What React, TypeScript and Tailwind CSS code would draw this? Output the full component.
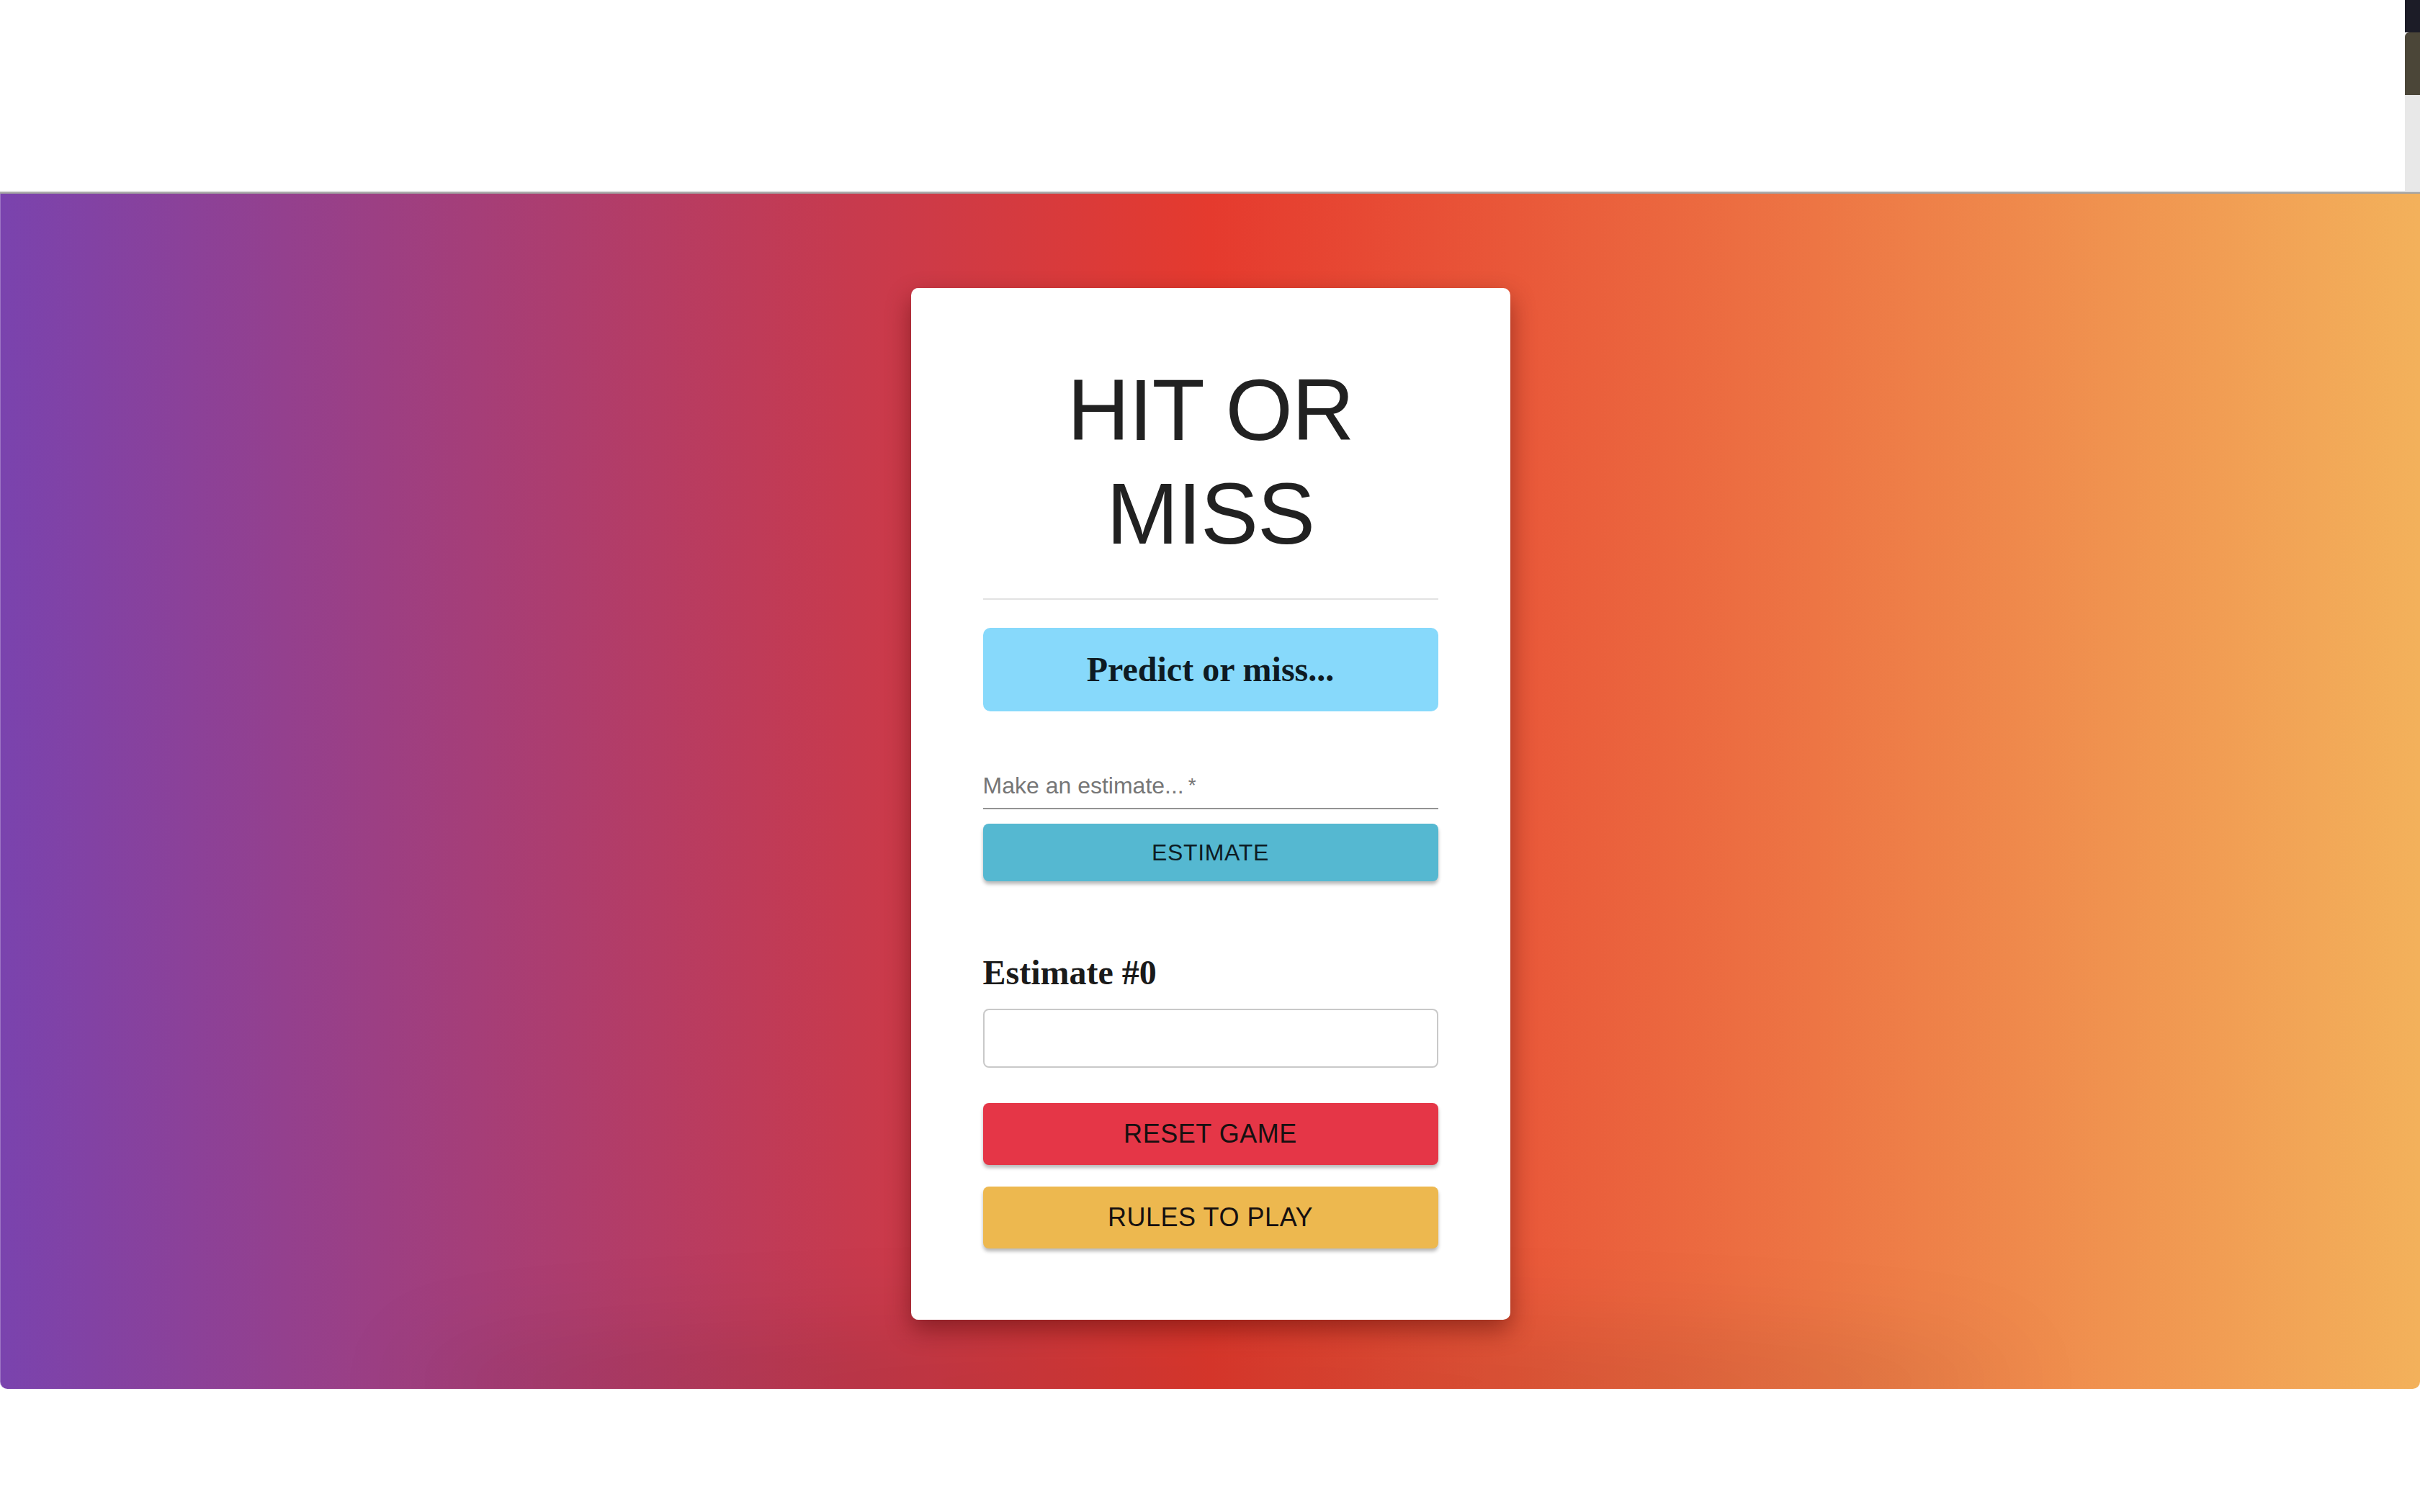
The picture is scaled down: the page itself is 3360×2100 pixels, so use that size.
import { ReactNode } from "react";

function GameButton({ color, children }: { color: string; children: ReactNode }) {
  return (
    <button
      type="button"
      className={`flex h-[86px] w-full items-center justify-center rounded-[8px] text-[36px] tracking-[0.015em] text-[#161010] shadow-[0_4px_5px_rgba(0,0,0,0.28)] ${color}`}
    >
      {children}
    </button>
  );
}

function Scrollbar() {
  return (
    <div className="flex w-[21px] flex-col">
      <div className="h-[45px] bg-[#1c1c27]" />
      <div className="h-[87px] rounded-tl-[6px] bg-[#4b4638]" />
      <div className="flex-1 bg-[#e8e8e8]" />
    </div>
  );
}

export default function App() {
  return (
    <div className="flex min-h-screen w-full flex-col bg-white font-['Liberation_Sans',Arial,sans-serif]">
      {/* top frame */}
      <div className="flex h-[265px]">
        <div className="flex-1 bg-white" />
        <Scrollbar />
      </div>
      <div className="h-[2px] bg-[#dedede]" />
      <div className="h-[2px] bg-[#a2a2a2]" />

      {/* gradient stage */}
      <main className="relative flex h-[1660px] justify-center overflow-hidden rounded-b-[10px] border-l border-[#9d74c4] bg-[linear-gradient(to_right,#7a43ae_0%,#c73a4e_35%,#e53a2e_50%,#ed7544_75%,#f3b15b_100%)] pt-[131px]">
        <div className="pointer-events-none absolute bottom-[-60px] left-[560px] h-[140px] w-[2240px] rounded-[50%] bg-black/10 blur-3xl" />

        <section className="relative flex h-[1433px] w-[832px] flex-col rounded-[10px] bg-white px-[100px] pb-[99px] pt-[97px] shadow-[0_14px_34px_rgba(60,0,0,0.45)]">
          <h1 className="text-center text-[120px] font-normal leading-[144px] tracking-[-0.01em] text-[#212121]">
            HIT OR MISS
          </h1>

          <div className="mt-[46px] h-[2px] bg-[#e2e2e2]" />

          <div className="mt-[39px] flex h-[116px] items-center justify-center rounded-[10px] bg-[#87d9fb]">
            <span className="font-['Liberation_Serif','Times_New_Roman',serif] text-[48px] font-bold text-[#0e1a22]">
              Predict or miss...
            </span>
          </div>

          <label className="mt-[87px] block border-b-2 border-[#939393] pb-[15px] text-[32px] leading-[32px] text-[#767676]">
            Make an estimate...<span className="ml-[6px] align-top text-[28px]">*</span>
          </label>

          <button
            type="button"
            className="mt-[20px] flex h-[80px] w-full items-center justify-center rounded-[8px] bg-[#55b8d1] text-[32px] tracking-[0.02em] text-[#0d1c24] shadow-[0_4px_5px_rgba(0,0,0,0.28)]"
          >
            ESTIMATE
          </button>

          <h2 className="mt-[103px] font-['Liberation_Serif','Times_New_Roman',serif] text-[48px] font-bold leading-[48px] text-[#1a1a1a]">
            Estimate #0
          </h2>

          <div className="mt-[26px] h-[82px] rounded-[8px] border-2 border-[#c9c9c9] bg-white" />

          <div className="mt-[49px]">
            <GameButton color="bg-[#e53647]">RESET GAME</GameButton>
          </div>
          <div className="mt-[30px]">
            <GameButton color="bg-[#edb84f]">RULES TO PLAY</GameButton>
          </div>
        </section>
      </main>

      <div className="flex-1 bg-white" />
    </div>
  );
}
